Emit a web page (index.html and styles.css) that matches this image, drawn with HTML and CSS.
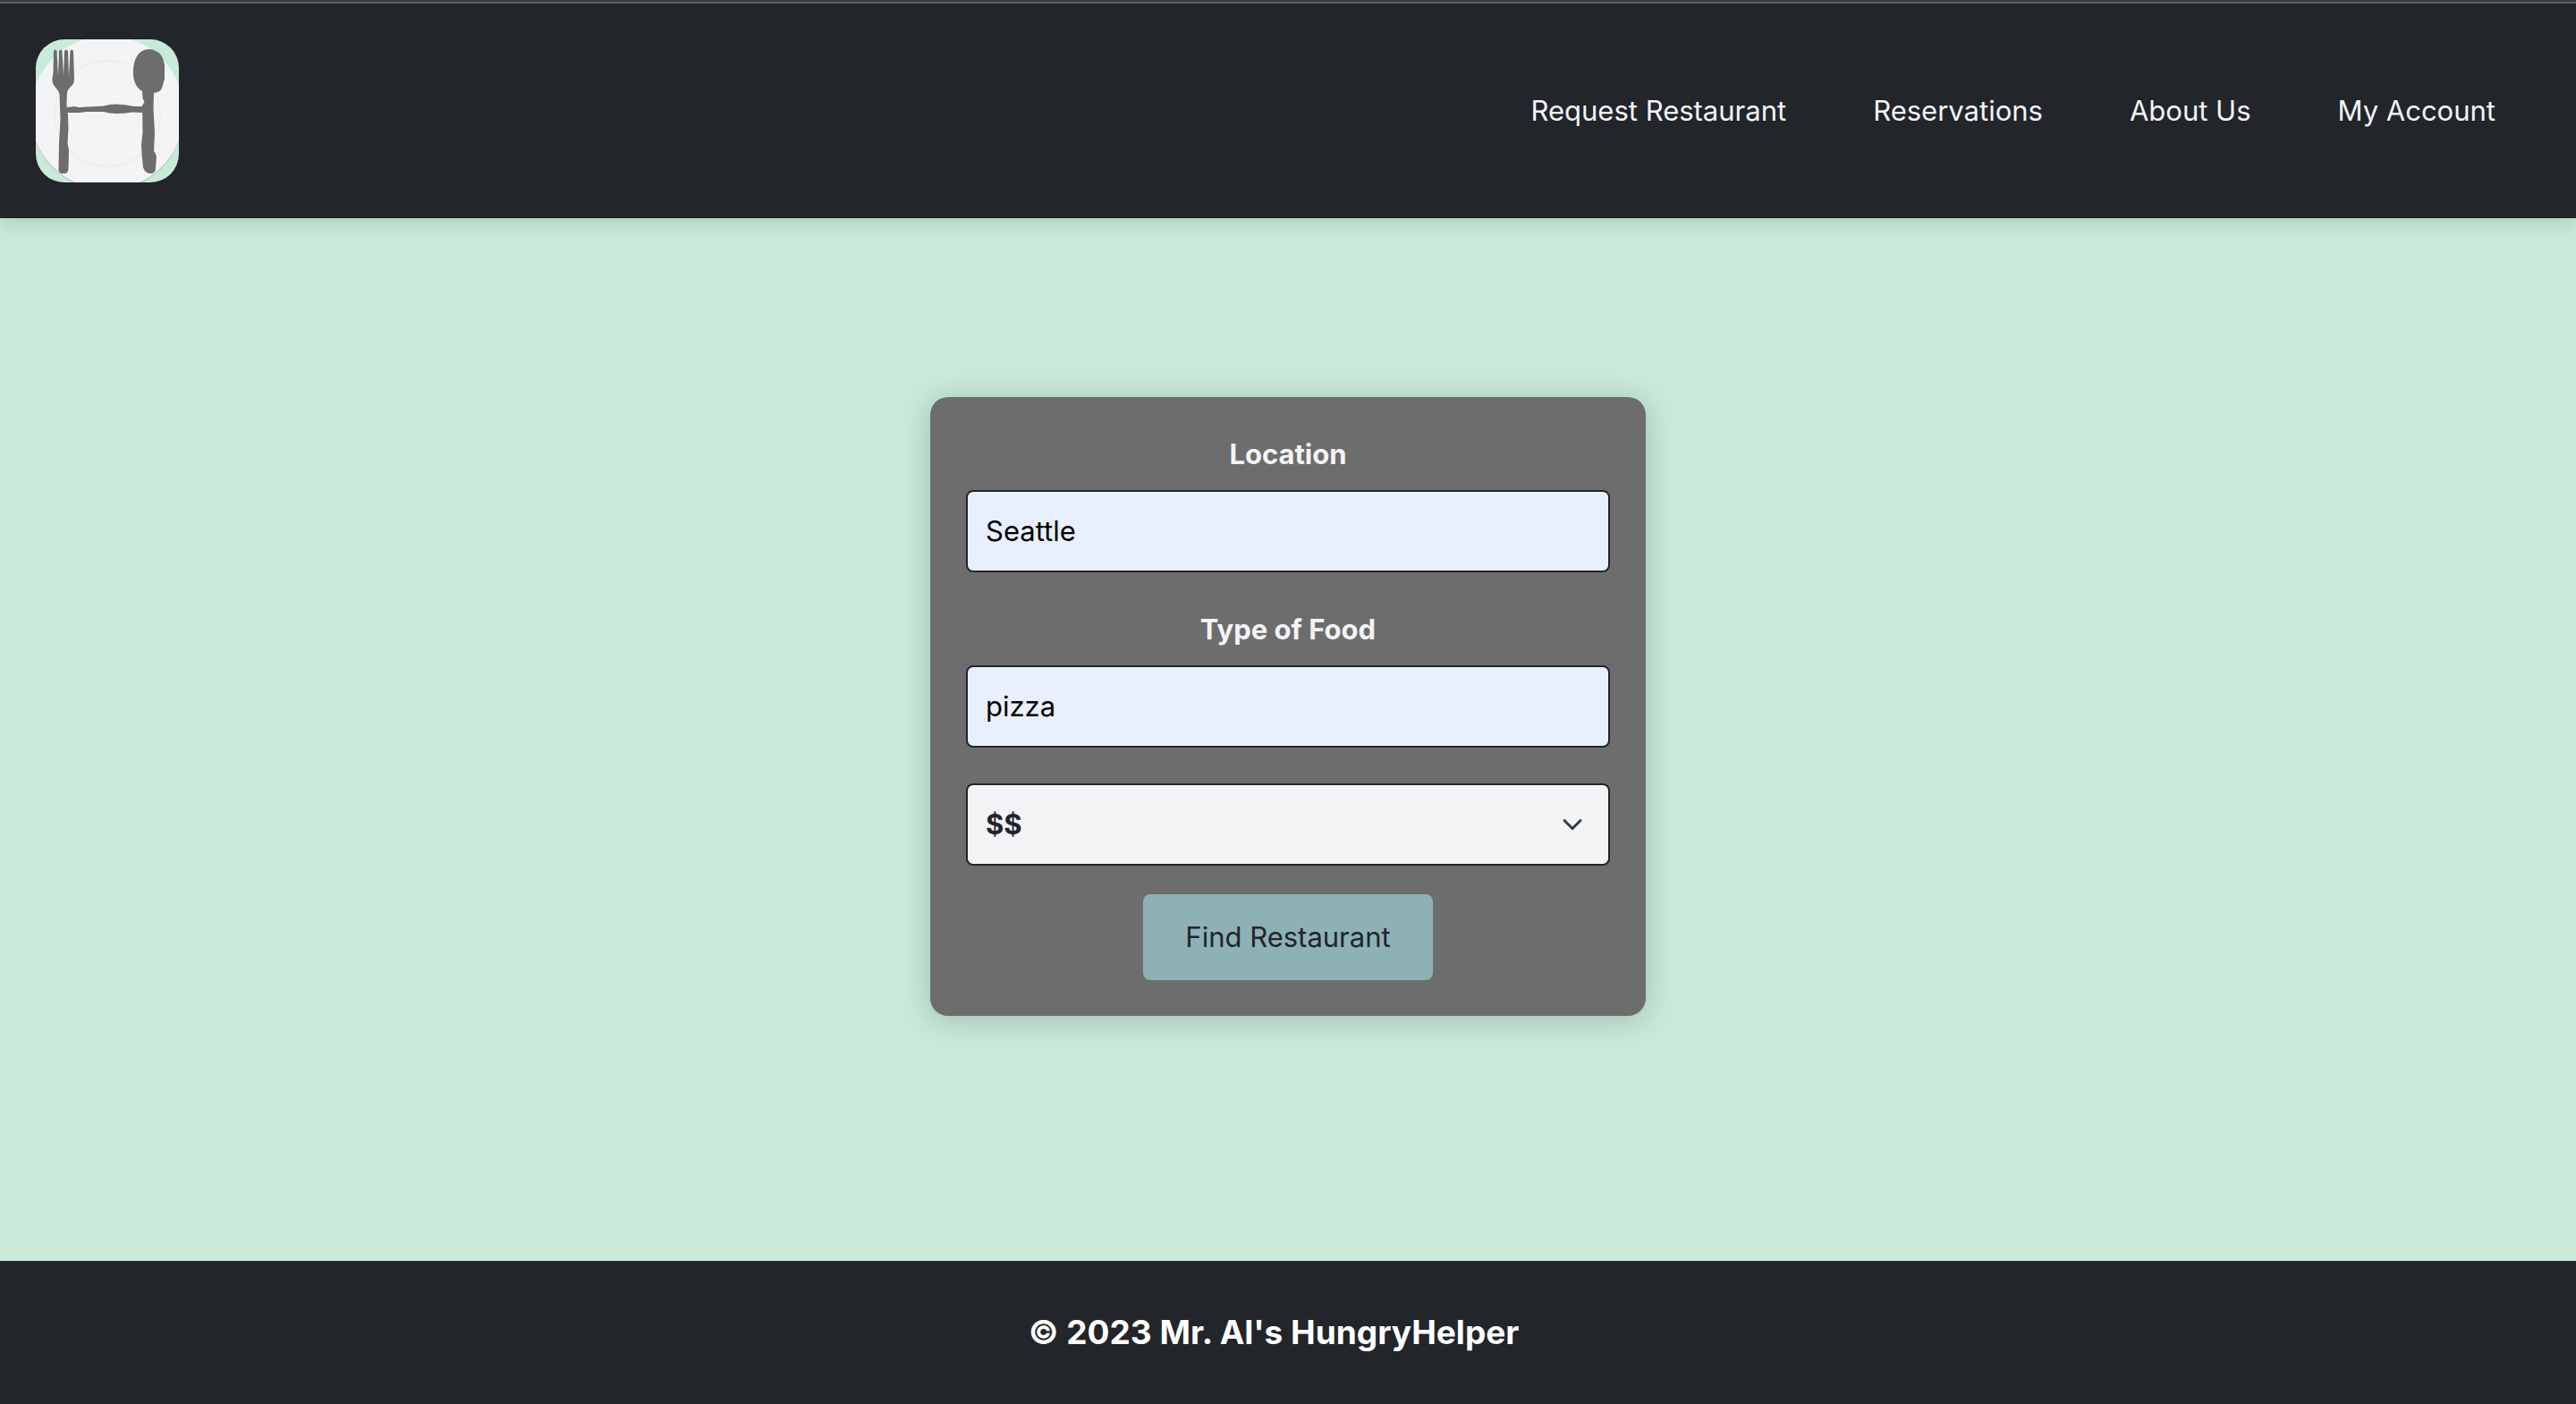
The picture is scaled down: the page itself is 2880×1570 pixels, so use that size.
FILE: index.html
```html
<!DOCTYPE html>
<html lang="en">
<head>
<meta charset="utf-8">
<title>HungryHelper</title>
<meta name="viewport" content="width=device-width, initial-scale=1">
<link rel="stylesheet" href="styles.css">
</head>
<body>
<header class="site-header">
  <a class="brand" href="#" aria-label="HungryHelper home">
    <svg class="logo" viewBox="0 0 160 160" aria-hidden="true">
      <rect width="160" height="160" fill="#c8ead9"/>
      <circle cx="80" cy="83" r="86" fill="#a9b5b0"/>
      <circle cx="80" cy="82" r="86" fill="#f3f4f6"/>
      <circle cx="80" cy="83" r="59" fill="none" stroke="#eceef0" stroke-width="2"/>
      <g fill="#6d6d6d">
        <path d="M20 13Q21.500 10 23.500 13L25 41 26 13Q28 10 29.500 13L31 41 32 13Q34 10 36 13L37 42 38.500 13Q40 10 42 13L43 44Q43 49 40 52 36 55 35 60L34.500 73 36 85 36.500 100 35.500 116 37 124 36.500 145Q36 150 32 150H29Q25 149 25.500 145L26 116 27.500 90 26.500 61Q26 58 23 55L20 51Q18 48 18.500 43L19.500 38Z"/>
        <path d="M35 76L43 75 48 76 76 74.500Q82 72.500 90 72.500 100 72.500 110 75H120V82L108 81.500Q98 83 90 83 82 83 76 81L56 81 49 82 35 82Z"/>
        <path d="M127 11C115 11 109 22 109 37 109 49 113 54 119 58L119.500 66 121.500 70 119 74 119.500 104 118 118 118.500 128 120 143Q122 150 128 150 134 150 134 144L135 131 133.500 127 132 125 133 104 131.500 78 132 60C138 59 141 57 142 51L144 44V28C142 20 140 16 136 14 133 12 130 11 127 11Z"/>
      </g>
    </svg>
  </a>
  <nav class="nav" aria-label="Main">
    <a href="#">Request Restaurant</a>
    <a href="#">Reservations</a>
    <a href="#">About Us</a>
    <a href="#">My Account</a>
  </nav>
</header>
<main class="main">
  <form class="card">
    <div class="field">
      <label for="location">Location</label>
      <input class="control" id="location" type="text" value="Seattle">
    </div>
    <div class="field">
      <label for="food">Type of Food</label>
      <input class="control" id="food" type="text" value="pizza">
    </div>
    <div class="select-wrap">
      <select class="control price" aria-label="Price range">
        <option>$</option>
        <option selected>$$</option>
        <option>$$$</option>
      </select>
      <svg class="chevron" viewBox="0 0 16 16" aria-hidden="true"><path d="m2 5 6 6 6-6" fill="none" stroke="#343a40" stroke-width="2" stroke-linecap="round" stroke-linejoin="round"/></svg>
    </div>
    <button class="submit" type="button">Find Restaurant</button>
  </form>
</main>
<footer class="site-footer">
  <p>© 2023 Mr. Al's HungryHelper</p>
</footer>
</body>
</html>
```
FILE: styles.css
```css
* {
  box-sizing: border-box;
}

body {
  margin: 0;
  min-height: 100vh;
  display: flex;
  flex-direction: column;
  border-top: 2px solid #38383f;
  background: #c8ead9;
  color: #22252a;
  font-family: Inter, "Liberation Sans", sans-serif;
  font-size: 31px;
  line-height: 48px;
}

.site-header {
  display: flex;
  align-items: center;
  justify-content: space-between;
  padding: 40px 90px 40px 40px;
  border-top: 2px solid #606164;
  background: #22252a;
  box-shadow: 0 8px 16px rgba(0, 0, 0, 0.1);
}

.brand,
.logo {
  display: block;
}

.logo {
  width: 160px;
  height: 160px;
  border-radius: 32px;
}

.nav {
  display: flex;
  gap: 97px;
}

.nav a {
  color: #f3f4f6;
  text-decoration: none;
}

.main {
  flex: 1;
  padding: 200px 40px 40px;
}

.card {
  display: flex;
  flex-direction: column;
  width: 100%;
  max-width: 800px;
  margin: 0 auto;
  padding: 40px;
  border-radius: 20px;
  background: #6d6d6d;
  box-shadow: 0 4px 32px rgba(0, 0, 0, 0.2);
}

.field {
  display: flex;
  flex-direction: column;
  gap: 16px;
  margin-bottom: 40px;
}

.field label {
  color: #f3f4f6;
  font-weight: 700;
  text-align: center;
}

.control {
  display: block;
  width: 100%;
  padding: 20px;
  border: 2px solid #22252a;
  border-radius: 8px;
  background: #e8effd;
  color: #000;
  font: inherit;
}

.select-wrap {
  position: relative;
  margin-bottom: 32px;
}

.price {
  appearance: none;
  background: #f3f4f6;
  color: #22252a;
  font-weight: 700;
}

.chevron {
  position: absolute;
  top: 34px;
  right: 30px;
  width: 24px;
  height: 24px;
  pointer-events: none;
}

.submit {
  align-self: center;
  padding: 24px 47px;
  border: 0;
  border-radius: 8px;
  background: #8db1b5;
  color: #22252a;
  font: inherit;
}

.site-footer {
  padding: 56px 32px 56px 0;
  background: #22252a;
  color: #fff;
  font-size: 37px;
  font-weight: 700;
  text-align: center;
}

.site-footer p {
  margin: 0;
}
```
